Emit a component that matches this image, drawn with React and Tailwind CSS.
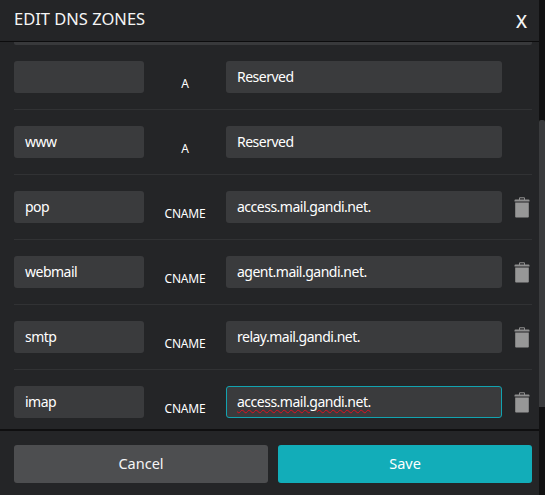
const rows = [
  { host: "", type: "A", value: "Reserved" },
  { host: "www", type: "A", value: "Reserved" },
  { host: "pop", type: "CNAME", value: "access.mail.gandi.net.", del: true },
  { host: "webmail", type: "CNAME", value: "agent.mail.gandi.net.", del: true },
  { host: "smtp", type: "CNAME", value: "relay.mail.gandi.net.", del: true },
  { host: "imap", type: "CNAME", value: "access.mail.gandi.net.", del: true, focus: true },
];

function Trash() {
  return (
    <svg width="16" height="21" viewBox="0 0 16 21" className="block">
      <path fill="#8f8f8f" d="M5 2.5V1.2C5 .6 5.4.3 6 .3h4c.6 0 1 .3 1 .9v1.3h3.6c.5 0 .9.3.9.8v1.2H.5V3.3c0-.5.4-.8.9-.8H5zm1 0h4V1.3H6v1.2z" />
      <path fill="#979797" d="M1.2 5.5h13.6v14.2c0 .5-.3.8-.8.8H2c-.5 0-.8-.3-.8-.8V5.5z" />
    </svg>
  );
}

function Row({ host, type, value, del, focus, last }) {
  return (
    <div className={`flex items-start pt-4 h-[65px] ${last ? "" : "border-b border-[#313234]"}`}>
      <div className="w-[130px] shrink-0 h-8 rounded-[3px] bg-[#3a3b3d] px-[11px] flex items-center text-sm tracking-[-0.5px] text-white">{host}</div>
      <div className="w-[82px] shrink-0 h-8 pb-px flex items-end justify-center text-xs leading-4 tracking-[-0.2px] text-white">{type}</div>
      <div className={`w-[276px] shrink-0 h-8 rounded-[3px] bg-[#3a3b3d] flex items-center text-sm tracking-[-0.5px] text-white ${focus ? "border border-[#12a3b0] px-[10px]" : "px-[11px]"}`}>
        {focus ? <span className="underline decoration-wavy decoration-[#e01020] decoration-1 underline-offset-2">{value}</span> : value}
      </div>
      {del && <div className="ml-[12px] w-4 shrink-0 h-8 flex items-center"><Trash /></div>}
    </div>
  );
}

export default function App() {
  return (
    <div className="w-[545px] h-[495px] flex overflow-hidden bg-[#242527] font-['Noto_Sans',sans-serif]">
      <div className="w-[539px] shrink-0 h-full flex flex-col">
        <div className="h-[42px] shrink-0 border-b border-[#0c0c0d] pl-[14px] pr-[7px] flex items-center justify-between pb-[2px]">
          <span className="text-[16.5px] text-[#f5f5f5]">EDIT DNS ZONES</span>
          <span className="text-lg font-medium text-[#f5f5f5] mr-[5px] mt-[2px]">X</span>
        </div>
        <div className="h-[387px] shrink-0 overflow-hidden pl-[14px] pr-[7px]">
          <div className="h-[3px] rounded-b-[2px] bg-[#38393b]" />
          {rows.map((r, i) => <Row key={i} {...r} last={i === rows.length - 1} />)}
        </div>
        <div className="flex-1 border-t-2 border-[#0f0f10] pl-[14px] pr-[7px] pt-[14px] flex gap-[10px]">
          <button className="w-[254px] h-[38px] rounded-[3px] bg-[#4d4e50] text-[14.5px] text-[#f5f5f5]">Cancel</button>
          <button className="w-[254px] h-[38px] rounded-[3px] bg-[#12adb9] text-[14.5px] text-white">Save</button>
        </div>
      </div>
      <div className="w-[6px] h-full bg-[#111112] pt-[120px]">
        <div className="h-[287px] rounded-t-[2px] bg-[#3a3b3d]" />
      </div>
    </div>
  );
}
